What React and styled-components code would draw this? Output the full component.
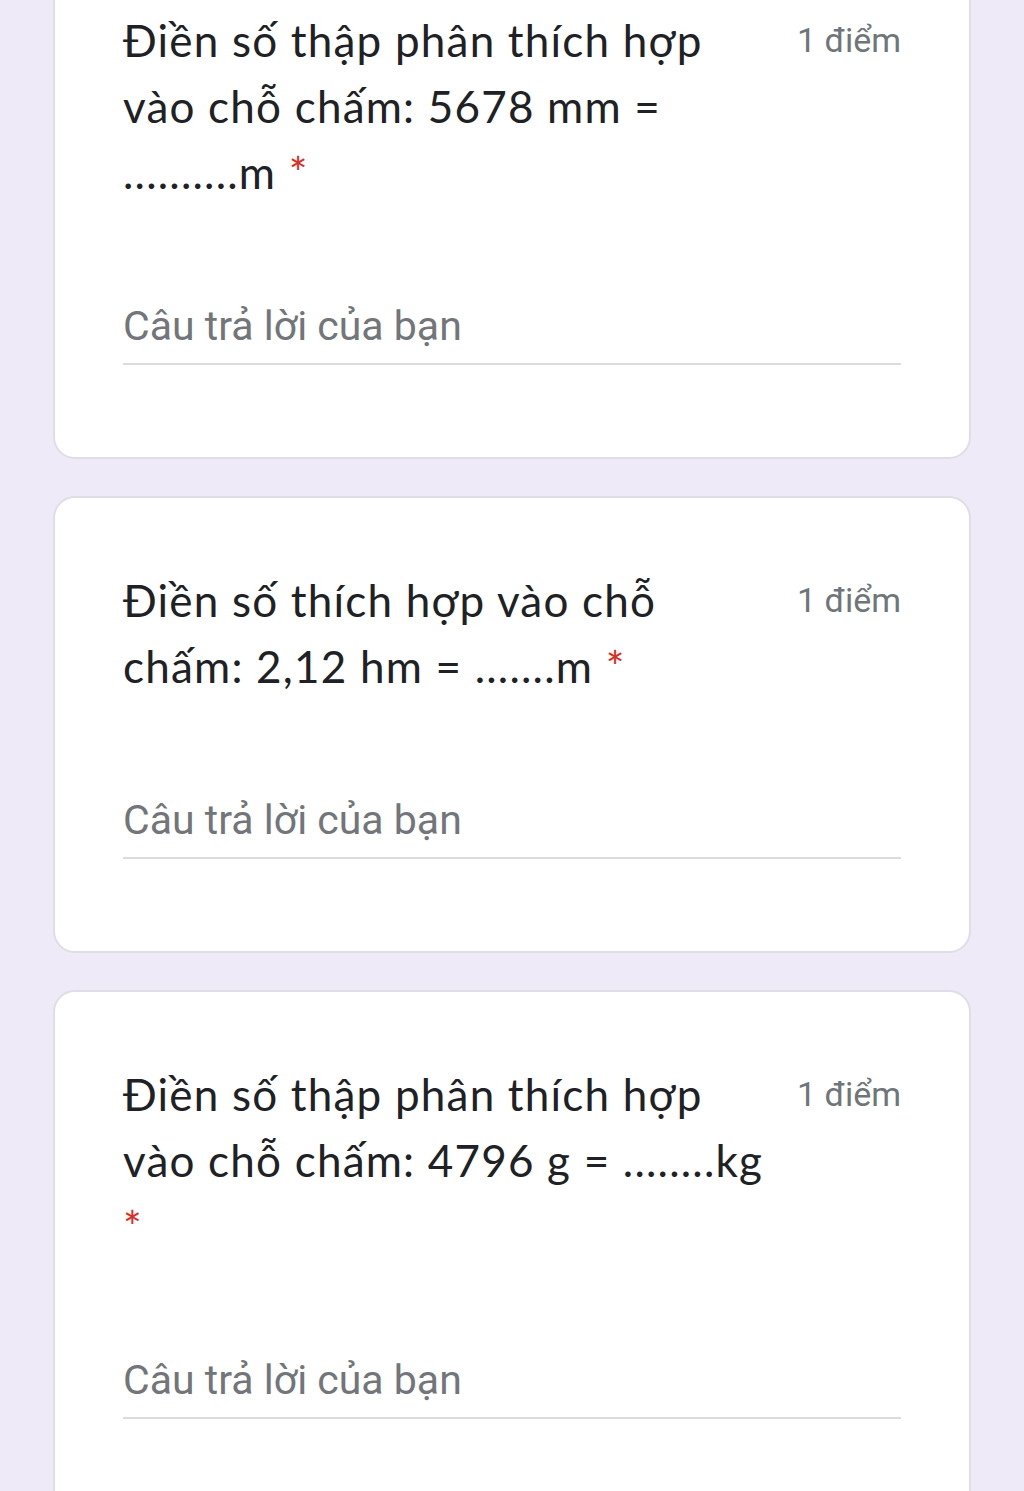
import React from 'react'
import styled, { createGlobalStyle } from 'styled-components'

const GlobalStyle = createGlobalStyle`
    html, body {
        margin: 0;
        padding: 0;
        background: #eeeaf7;
    }
    body {
        font-family: Roboto, "Noto Sans", sans-serif;
        overflow: hidden;
    }
`

const questions = [
    { lines: ['Điền số thập phân thích hợp', 'vào chỗ chấm: 5678 mm =', '..........m'], starOwnLine: false },
    { lines: ['Điền số thích hợp vào chỗ', 'chấm: 2,12 hm = .......m'], starOwnLine: false },
    { lines: ['Điền số thập phân thích hợp', 'vào chỗ chấm: 4796 g = ........kg'], starOwnLine: true },
]

function App() {
    return (
        <>
            <GlobalStyle />
            <Page>
                {questions.map((q, i) => (
                    <Card key={i}>
                        <Header>
                            <Title>
                                {q.lines.map((line, j) => (
                                    <Line key={j}>
                                        {line}
                                        {!q.starOwnLine && j === q.lines.length - 1 && <Star> *</Star>}
                                    </Line>
                                ))}
                                {q.starOwnLine && <Line><Star>*</Star></Line>}
                            </Title>
                            <Points>1 điểm</Points>
                        </Header>
                        <Answer>
                            <Placeholder>Câu trả lời của bạn</Placeholder>
                        </Answer>
                    </Card>
                ))}
            </Page>
        </>
    )
}

const Page = styled.div`
    margin-top: -64px;
    padding: 0 53px;
    display: flex;
    flex-direction: column;
    gap: 37px;
`

const Card = styled.div`
    background: #ffffff;
    border: 2px solid #dfdde6;
    border-radius: 22px;
    padding: 69px 68px 92px 68px;
`

const Header = styled.div`
    display: flex;
    justify-content: space-between;
    align-items: flex-start;
`

const Title = styled.div`
    font-family: Lato, "Noto Sans", sans-serif;
    font-size: 44px;
    line-height: 66px;
    letter-spacing: 1.2px;
    color: #202124;
`

const Line = styled.div`
    white-space: nowrap;
`

const Star = styled.span`
    color: #d93025;
`

const Points = styled.div`
    font-family: Roboto, sans-serif;
    font-size: 34px;
    line-height: 66px;
    color: #70757a;
    white-space: nowrap;
`

const Answer = styled.div`
    margin-top: 88px;
    border-bottom: 2px solid #dcdcdf;
    padding-bottom: 4px;
`

const Placeholder = styled.div`
    font-family: Roboto, sans-serif;
    font-size: 41px;
    line-height: 66px;
    color: #727579;
`

export default App
